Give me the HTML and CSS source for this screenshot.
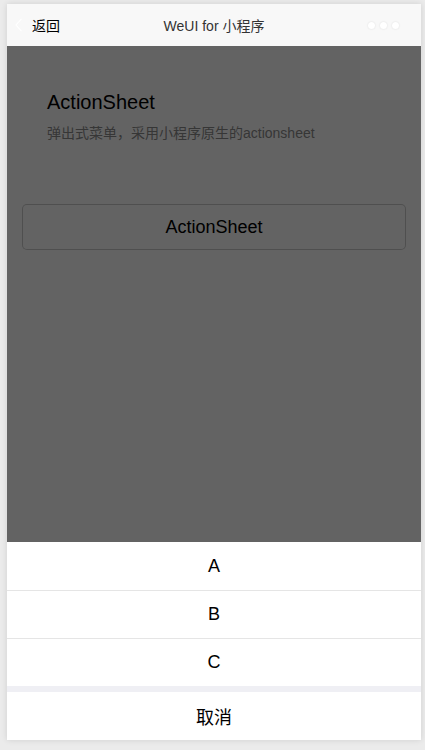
FILE: index.html
```html
<!DOCTYPE html>
<html lang="zh-CN">
<head>
<meta charset="utf-8">
<title>WeUI for 小程序</title>
<link rel="stylesheet" href="styles.css">
</head>
<body>
<div class="phone">
  <header class="nav">
    <div class="nav-left">
      <svg class="chevron" width="8" height="14" viewBox="0 0 8 14"><path d="M6.5 0.8 L1 7 L6.5 13.2" fill="none" stroke="#ffffff" stroke-width="1.1"/></svg>
      <span class="back">返回</span>
    </div>
    <div class="nav-title">WeUI for 小程序</div>
    <div class="nav-dots"><span class="dot"></span><span class="dot"></span><span class="dot"></span></div>
  </header>
  <main class="page">
    <div class="page-hd">
      <div class="page-title">ActionSheet</div>
      <div class="page-desc">弹出式菜单，采用小程序原生的actionsheet</div>
    </div>
    <div class="page-bd">
      <button class="btn">ActionSheet</button>
    </div>
    <div class="mask"></div>
    <div class="sheet">
      <div class="sheet-menu">
        <div class="sheet-item">A</div>
        <div class="sheet-item">B</div>
        <div class="sheet-item">C</div>
      </div>
      <div class="sheet-cancel">取消</div>
    </div>
  </main>
</div>
</body>
</html>
```
FILE: styles.css
```css
html, body {
  margin: 0;
  padding: 0;
}
body {
  background: #ebebeb;
  font-family: "Liberation Sans", Arial, "Noto Sans CJK SC", sans-serif;
  width: 425px;
  height: 750px;
  overflow: hidden;
}
.phone {
  margin: 4px 0 0 7px;
  width: 414px;
  height: 736px;
  background: #f8f8f8;
  box-shadow: 0 0 6px rgba(0, 0, 0, 0.12);
  display: flex;
  flex-direction: column;
}
.nav {
  height: 42px;
  flex: none;
  background: #f8f8f8;
  display: flex;
  align-items: center;
  position: relative;
}
.nav-left {
  display: flex;
  align-items: center;
  padding-left: 8px;
  width: 100px;
  box-sizing: border-box;
}
.chevron {
  display: block;
}
.back {
  margin-left: 9px;
  font-size: 14px;
  color: #000;
}
.nav-title {
  flex: 1;
  text-align: center;
  font-size: 14px;
  color: #333;
}
.nav-dots {
  width: 100px;
  display: flex;
  justify-content: flex-end;
  gap: 5px;
  padding-right: 22px;
  box-sizing: border-box;
}
.dot {
  width: 7px;
  height: 7px;
  border-radius: 50%;
  background: #fff;
  box-shadow: 0 0 2px rgba(0, 0, 0, 0.12);
}
.page {
  flex: 1;
  position: relative;
  overflow: hidden;
}
.page-hd {
  padding: 42px 40px 0 40px;
}
.page-title {
  font-size: 20px;
  line-height: 28px;
  color: #000;
}
.page-desc {
  margin-top: 7px;
  font-size: 14px;
  line-height: 20px;
  color: #888;
}
.page-bd {
  padding: 61px 15px 0 15px;
}
.btn {
  display: block;
  width: 100%;
  height: 46px;
  box-sizing: border-box;
  border: 1px solid rgba(0, 0, 0, 0.2);
  border-radius: 5px;
  background: #f8f8f8;
  font-family: inherit;
  font-size: 18px;
  color: #000;
  padding: 0;
}
.mask {
  position: absolute;
  inset: 0;
  background: rgba(0, 0, 0, 0.6);
}
.sheet {
  position: absolute;
  left: 0;
  right: 0;
  bottom: 0;
  background: #efeff4;
}
.sheet-menu {
  background: #fff;
}
.sheet-item, .sheet-cancel {
  height: 48px;
  box-sizing: border-box;
  display: flex;
  align-items: center;
  justify-content: center;
  font-size: 18px;
  color: #000;
  background: #fff;
}
.sheet-item + .sheet-item {
  border-top: 1px solid #e5e5e5;
}
.sheet-cancel {
  margin-top: 6px;
}
```
